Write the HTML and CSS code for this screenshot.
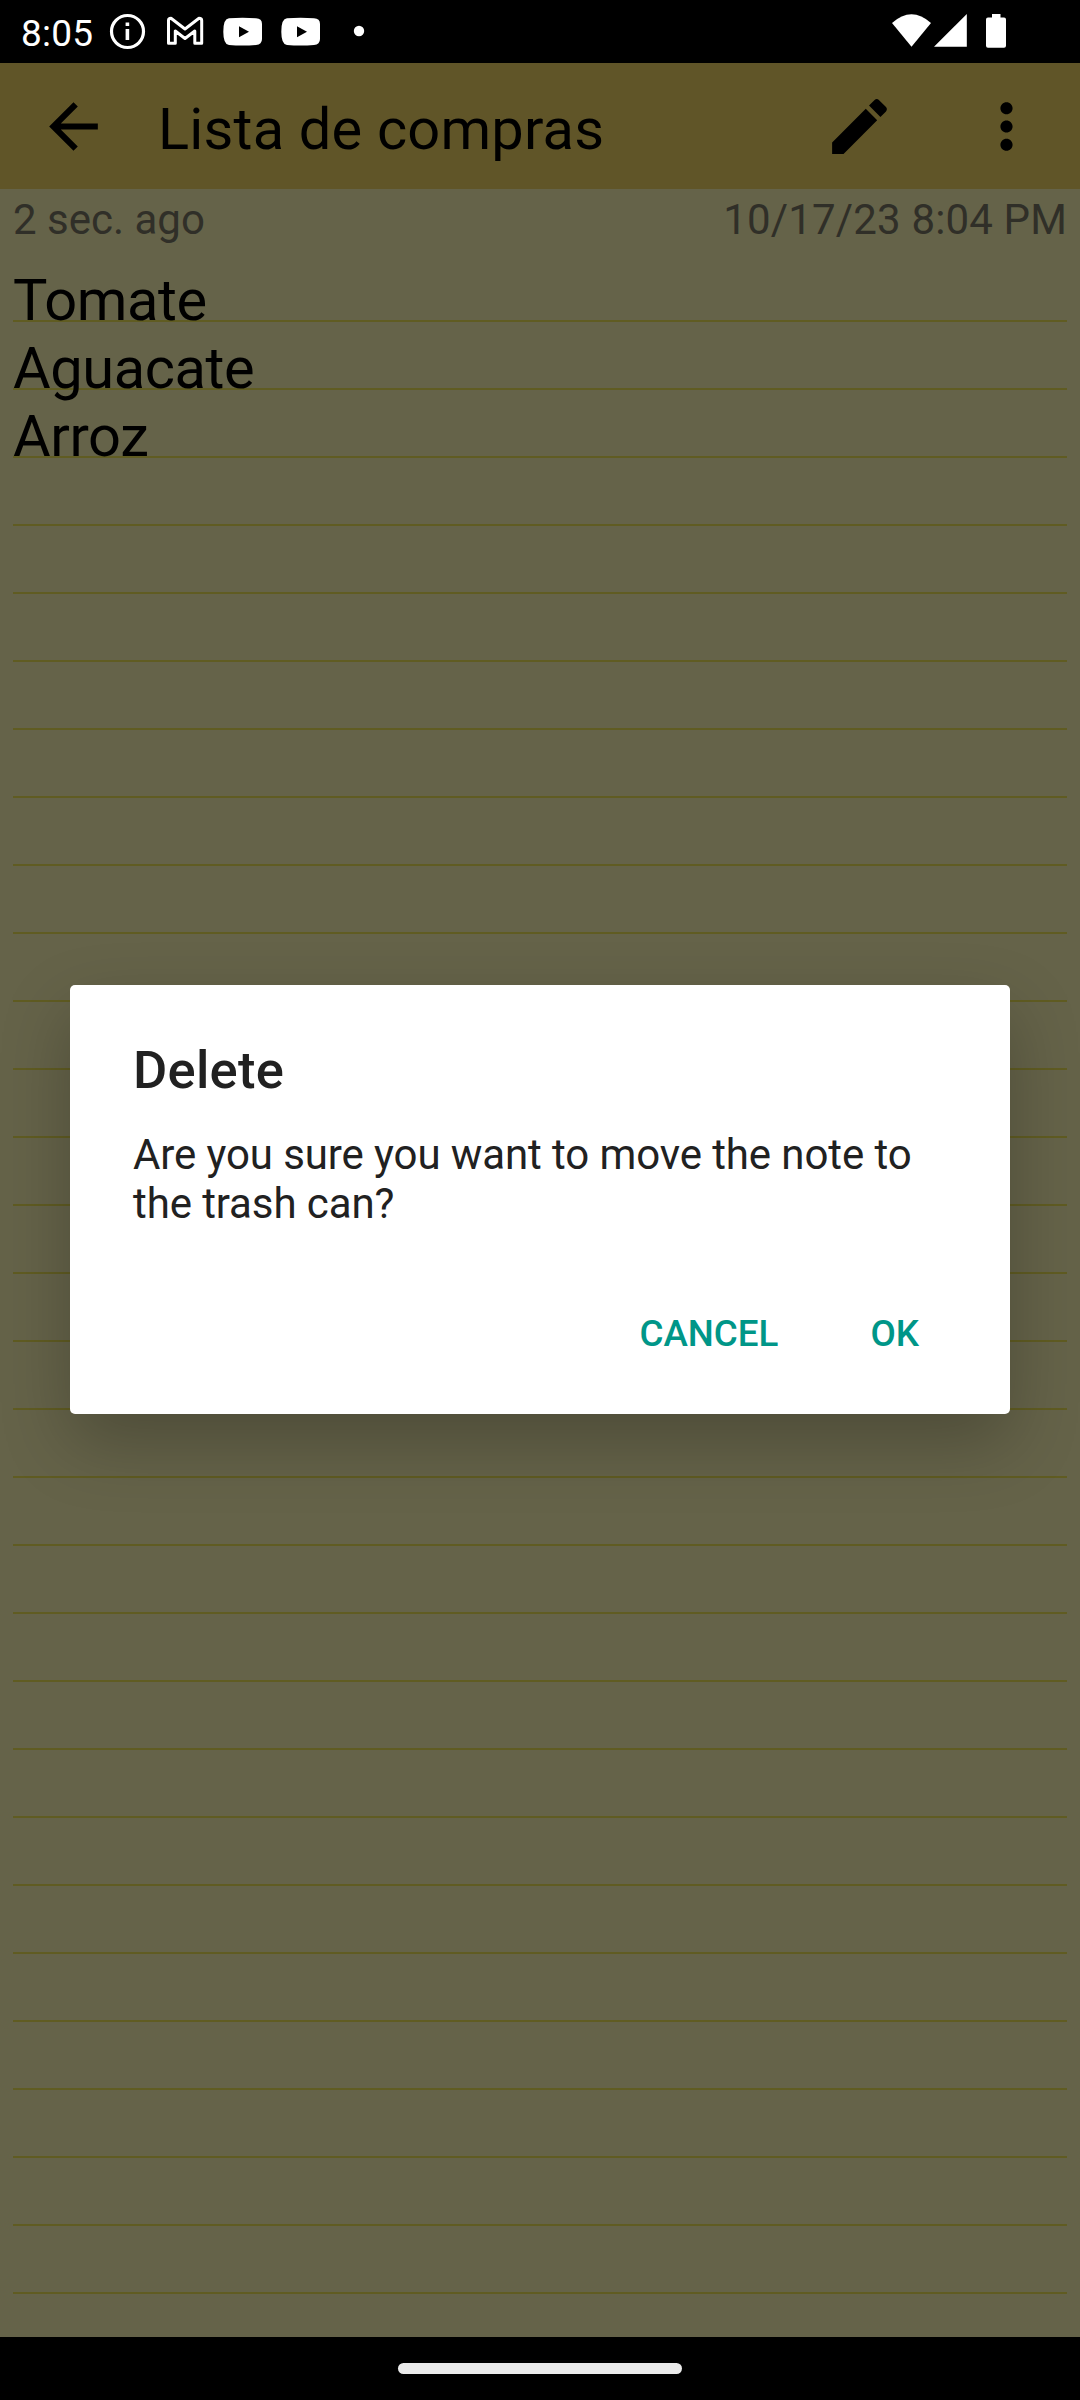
FILE: index.html
```html
<!DOCTYPE html>
<html lang="es">
<head>
<meta charset="utf-8">
<title>Lista de compras</title>
<link rel="stylesheet" href="styles.css">
</head>
<body>
<div class="screen">
  <header class="status">
    <span class="clock">8:05</span>
    <svg class="status-left" width="260" height="63" viewBox="105 0 260 63" fill="none">
      <circle cx="127.5" cy="31.5" r="16" stroke="#fff" stroke-width="3.2"/>
      <path fill="#fff" d="M125.6 22.4h3.6v3.6h-3.6zM125.6 29h3.6v11h-3.6z"/>
      <path stroke="#fff" stroke-width="3" stroke-linejoin="round" d="M168.500 20.500Q168.500 18.300 171 18.300L185 29L199 18.300Q201.700 18.300 201.700 20.500V43.300H194.800V31L185 38.500L175.300 31V43.300H168.500Z"/>
      <path fill="#fff" fill-rule="evenodd" d="M229 18.300Q242.500 17.300 256 18.300Q262 18.500 262 24V39Q262 44.500 256 45Q242.500 46 229 45Q223.300 44.500 223.300 31.700Q223.300 18.600 229 18.300ZM239 26.300V37.200L249 31.700Z"/>
      <path fill="#fff" fill-rule="evenodd" d="M287 18.300Q300.500 17.300 314 18.300Q320 18.500 320 24V39Q320 44.500 314 45Q300.500 46 287 45Q281.300 44.500 281.300 31.700Q281.300 18.600 287 18.300ZM297 26.300V37.200L307 31.700Z"/>
      <circle cx="359" cy="31" r="5.200" fill="#fff"/>
    </svg>
    <svg class="status-right" width="120" height="63" viewBox="890 0 120 63" fill="#fff">
      <path d="M892 23Q911.500 5.500 931 23L911.500 46.700Z"/>
      <path d="M966.800 14V46.800H934Z"/>
      <path d="M992 14h8.500v3.500h3.500q2 0 2 2v26.300q0 2-2 2h-16q-2 0-2-2v-26.300q0-2 2-2h4z"/>
    </svg>
  </header>
  <nav class="appbar">
    <svg class="back" width="73" height="73" viewBox="0 0 24 24"><path d="M20 11H7.830l5.590-5.590L12 4l-8 8 8 8 1.410-1.410L7.830 13H20v-2z"/></svg>
    <h1 class="title">Lista de compras</h1>
    <svg class="edit" width="73" height="73" viewBox="0 0 24 24"><path d="M3 17.250V21h3.750L17.810 9.940l-3.750-3.750L3 17.250zM20.710 7.040c.39-.39.39-1.020 0-1.410l-2.340-2.340c-.39-.39-1.020-.39-1.410 0l-1.830 1.830 3.750 3.750 1.830-1.830z"/></svg>
    <svg class="more" width="73" height="73" viewBox="0 0 24 24"><path d="M12 8c1.100 0 2-.9 2-2s-.9-2-2-2-2 .9-2 2 .9 2 2 2zm0 2c-1.100 0-2 .9-2 2s.9 2 2 2 2-.9 2-2-.9-2-2-2zm0 6c-1.100 0-2 .9-2 2s.9 2 2 2 2-.9 2-2-.9-2-2-2z"/></svg>
  </nav>
  <div class="meta"><span>2 sec. ago</span><span class="created">10/17/23 8:04 PM</span></div>
  <main class="note">
    <div>Tomate</div>
    <div>Aguacate</div>
    <div>Arroz</div>
  </main>
  <footer class="navbar"><div class="pill"></div></footer>
  <section class="dialog" role="dialog">
    <h2 class="dialog-title">Delete</h2>
    <p class="dialog-text">Are you sure you want to move the note to the trash can?</p>
    <div class="actions"><button>CANCEL</button><button>OK</button></div>
  </section>
</div>
</body>
</html>
```
FILE: styles.css
```css
* { box-sizing: border-box; margin: 0; padding: 0; }
body { width: 1080px; height: 2400px; overflow: hidden; font-family: Roboto, sans-serif; background: #000; }
svg { display: block; flex: none; }
.screen { position: relative; display: flex; flex-direction: column; width: 1080px; height: 2400px; background: #656349; }
.status { display: flex; height: 63px; padding-left: 21px; background: #000; color: #fff; }
.clock { width: 84px; font-size: 37px; line-height: 67px; letter-spacing: .2px; white-space: nowrap; }
.status-right { margin-left: 525px; }
.appbar { display: flex; align-items: center; height: 126px; padding-left: 37px; background: #605528; color: #000; }
.title { width: 665px; margin-left: 48px; padding-top: 6px; font-size: 57.750px; font-weight: 400; line-height: 68px; letter-spacing: .2px; white-space: nowrap; }
.more { margin-left: 74px; }
.meta { display: flex; justify-content: space-between; height: 77px; padding: 0 13px; font-size: 42px; line-height: 61px; color: #302f28; }
.created { letter-spacing: .15px; }
.note { flex: 1; margin: 0 13px; font-size: 57.750px; line-height: 68px; letter-spacing: -.4px; color: #000; background: repeating-linear-gradient(transparent 0 54px, #605c22 54px 56px, transparent 56px 68px); }
.navbar { display: flex; justify-content: center; height: 63px; padding-top: 26px; background: #000; }
.pill { width: 284px; height: 11px; border-radius: 5.500px; background: #ebebeb; }
.dialog { position: absolute; left: 70px; top: 985px; width: 940px; height: 429px; padding: 54px 91px 0 63px; border-radius: 5px; background: #fff; color: #212121; box-shadow: 0 28px 70px rgba(0, 0, 0, .24); }
.dialog-title { font-size: 52.500px; font-weight: 500; line-height: 62px; letter-spacing: .25px; }
.dialog-text { margin-top: 29px; font-size: 42px; line-height: 49px; letter-spacing: -.1px; }
.actions { display: flex; justify-content: flex-end; gap: 92px; margin-top: 81px; }
.actions button { border: 0; background: none; color: #009688; font: 500 36.750px/49px Roboto, sans-serif; }
```
